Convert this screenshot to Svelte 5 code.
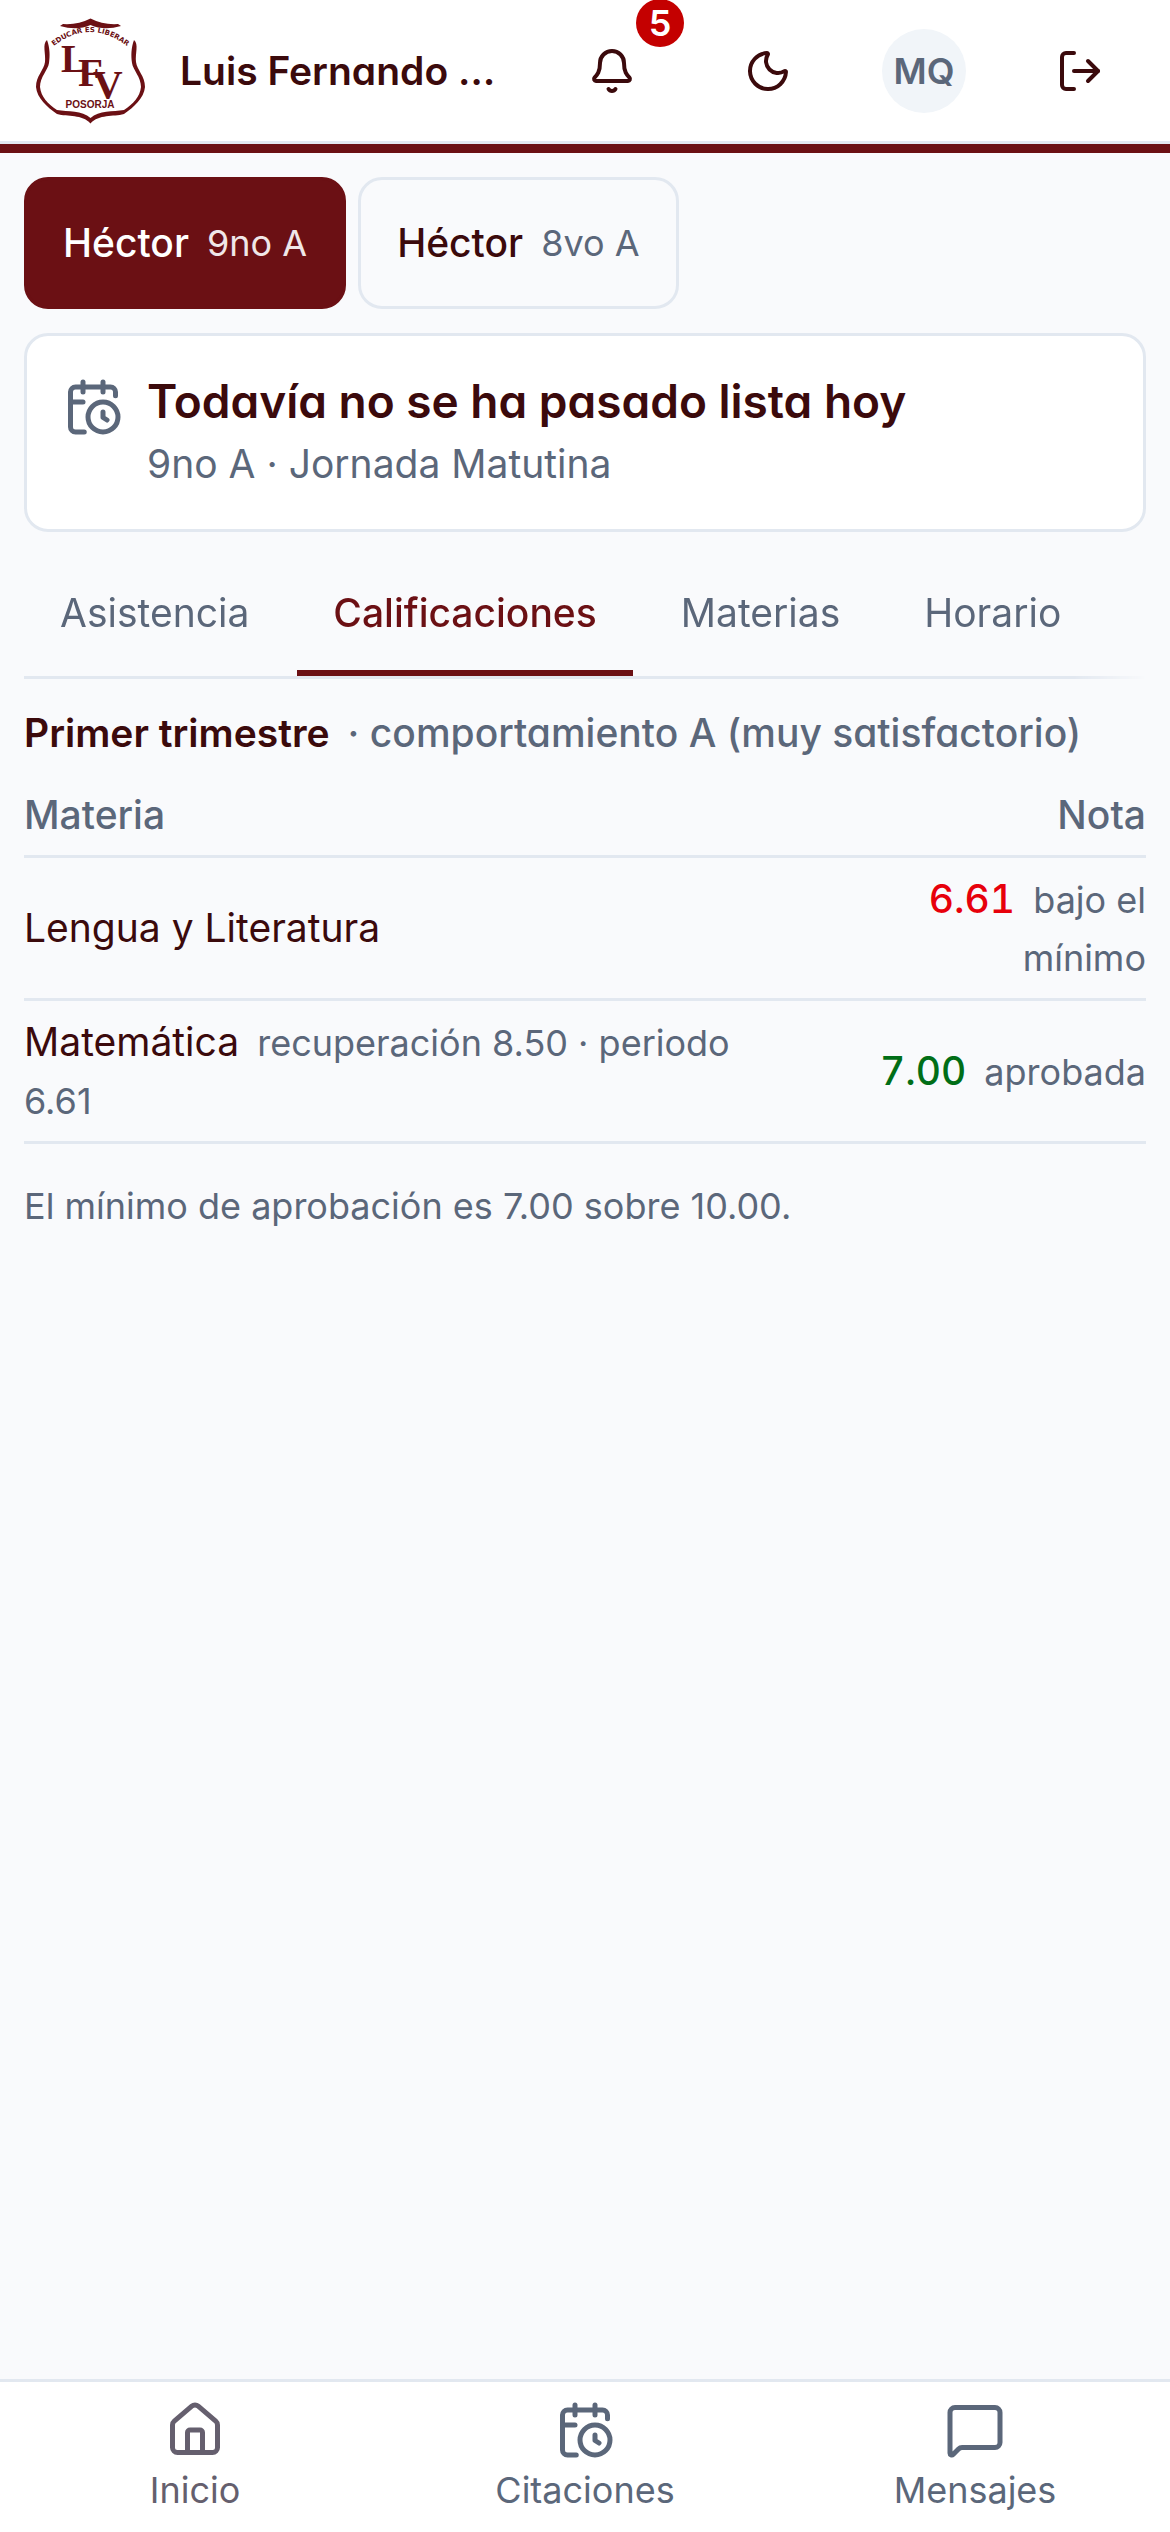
<script>
  const students = [
    { name: 'Héctor', course: '9no A' },
    { name: 'Héctor', course: '8vo A' }
  ];
  const tabs = ['Asistencia', 'Calificaciones', 'Materias', 'Horario'];
  const grades = [
    { subject: 'Lengua y Literatura', detail: '', grade: '6.61', status: 'bajo el mínimo', passed: false },
    { subject: 'Matemática', detail: 'recuperación 8.50 · periodo 6.61', grade: '7.00', status: 'aprobada', passed: true }
  ];
  const links = [
    { label: 'Inicio', icon: 'house' },
    { label: 'Citaciones', icon: 'calendar' },
    { label: 'Mensajes', icon: 'message' }
  ];
  let student = $state(0);
  let tab = $state(1);
</script>

{#snippet icon(name, cls)}
  <svg class={cls} viewBox="0 0 24 24" fill="none" stroke="currentColor" stroke-width="2" stroke-linecap="round" stroke-linejoin="round" aria-hidden="true">
    {#if name === 'bell'}
      <path d="M10.268 21a2 2 0 0 0 3.464 0" />
      <path d="M3.262 15.326A1 1 0 0 0 4 17h16a1 1 0 0 0 .74-1.673C19.41 13.956 18 12.499 18 8A6 6 0 0 0 6 8c0 4.499-1.411 5.956-2.738 7.326" />
    {:else if name === 'moon'}
      <path d="M20.985 12.486a9 9 0 1 1-9.473-9.472c.405-.022.617.46.402.803a6 6 0 0 0 8.268 8.268c.344-.215.825-.004.803.401" />
    {:else if name === 'logout'}
      <path d="m16 17 5-5-5-5" />
      <path d="M21 12H9" />
      <path d="M9 21H5a2 2 0 0 1-2-2V5a2 2 0 0 1 2-2h4" />
    {:else if name === 'calendar'}
      <path d="M16 14v2.2l1.6 1" />
      <path d="M16 2v4" />
      <path d="M21 7.5V6a2 2 0 0 0-2-2H5a2 2 0 0 0-2 2v14a2 2 0 0 0 2 2h3.5" />
      <path d="M3 10h5" />
      <path d="M8 2v4" />
      <circle cx="16" cy="16" r="6" />
    {:else if name === 'house'}
      <path d="M15 21v-8a1 1 0 0 0-1-1h-4a1 1 0 0 0-1 1v8" />
      <path d="M3 10a2 2 0 0 1 .709-1.528l7-6a2 2 0 0 1 2.582 0l7 6A2 2 0 0 1 21 10v9a2 2 0 0 1-2 2H5a2 2 0 0 1-2-2z" />
    {:else}
      <path d="M22 17a2 2 0 0 1-2 2H6.828a2 2 0 0 0-1.414.586l-2.202 2.202A.71.71 0 0 1 2 21.286V5a2 2 0 0 1 2-2h16a2 2 0 0 1 2 2z" />
    {/if}
  </svg>
{/snippet}

<div class="page">
  <header>
    <a class="logo" href="#inicio" aria-label="Portada">
      <svg viewBox="4 5 132 132" aria-hidden="true">
        <defs><path id="motto" d="M29 50Q70 14 112 50" /></defs>
        <path d="M40 26L43 24Q58 25 70.5 18.500Q83 25 98 24L101 26Q84 31 70.500 25Q57 31 40 26Z" />
        <path d="M27 40C22 44 26 54 25 62C24 70 16 76 16 87C17 98 27 107 37 114C48 117 62 114 70.500 123.500C79 114 93 117 104 114C114 107 124 98 125 87C125 76 117 70 116 62C115 54 119 44 114 40C111 48 111 56 112 63C113 70 121 77 121 87C120 97 113 104 104 110C93 112 79 110 70.500 118C62 110 48 112 37 110C28 104 21 97 20 87C20 77 28 70 29 63C30 56 30 48 27 40Z" />
        <text class="motto"><textPath href="#motto" startOffset="50%" text-anchor="middle">EDUCAR ES LIBERAR</textPath></text>
        <text class="letter first" x="41" y="72">L</text>
        <text class="letter" x="58" y="86">F</text>
        <text class="letter" x="73" y="98">V</text>
        <text class="town" x="70" y="108" text-anchor="middle">POSORJA</text>
      </svg>
    </a>
    <h1>Luis Fernando …</h1>
    <button class="action" aria-label="Notificaciones">{@render icon('bell', 'small')}<span class="badge">5</span></button>
    <button class="action" aria-label="Modo oscuro">{@render icon('moon', 'small')}</button>
    <button class="action" aria-label="Perfil"><span class="avatar">MQ</span></button>
    <button class="action" aria-label="Salir">{@render icon('logout', 'small')}</button>
  </header>

  <main>
    <div class="chips">
      {#each students as s, i}
        <button class="chip" class:active={student === i} onclick={() => (student = i)}>
          <span class="name">{s.name}</span><span class="course">{s.course}</span>
        </button>
      {/each}
    </div>

    <section class="card">
      {@render icon('calendar', 'large')}
      <div>
        <h2>Todavía no se ha pasado lista hoy</h2>
        <p>9no A · Jornada Matutina</p>
      </div>
    </section>

    <div class="tabs" role="tablist">
      {#each tabs as t, i}
        <button class="tab" role="tab" aria-selected={tab === i} class:active={tab === i} onclick={() => (tab = i)}>{t}</button>
      {/each}
    </div>

    <h3><strong>Primer trimestre</strong><span>· comportamiento A (muy satisfactorio)</span></h3>

    <table>
      <thead>
        <tr><th scope="col">Materia</th><th scope="col" class="mark">Nota</th></tr>
      </thead>
      <tbody>
        {#each grades as g}
          <tr>
            <td>{g.subject}{#if g.detail}<small>{' '}{g.detail}</small>{/if}</td>
            <td class="mark"><b class:passed={g.passed}>{g.grade}</b><small>{' '}{g.status}</small></td>
          </tr>
        {/each}
      </tbody>
    </table>

    <p class="note">El mínimo de aprobación es 7.00 sobre 10.00.</p>
  </main>

  <nav>
    {#each links as l, i}
      <a href={'#' + l.icon} class:current={i === 0}>{@render icon(l.icon, 'large')}<span>{l.label}</span></a>
    {/each}
  </nav>
</div>

<style>
  :global(body) {
    margin: 0;
    background: #f9fafc;
  }
  .page {
    --maroon: #6b1014;
    --ink: #3b0a0c;
    --muted: #5b677a;
    --line: #e2e8f0;
    display: flex;
    flex-direction: column;
    min-height: 100vh;
    color: var(--ink);
    font: 400 39px/58px Inter, sans-serif;
  }
  h1, h2, h3, p {
    margin: 0;
  }
  button {
    border: 0;
    padding: 0;
    background: none;
    color: inherit;
    font: inherit;
    cursor: pointer;
  }
  a {
    color: inherit;
    text-decoration: none;
  }
  svg {
    display: block;
    flex: none;
  }
  .small {
    width: 48px;
    height: 48px;
  }
  .large {
    width: 60px;
    height: 60px;
  }
  h1, h2, h3 {
    font-feature-settings: 'cv11';
    font-weight: 600;
  }

  header {
    display: flex;
    align-items: center;
    gap: 24px;
    padding: 5px 24px 7px;
    background: #fff;
    border-bottom: 9px solid var(--maroon);
    box-shadow: inset 0 -3px var(--line);
  }
  .logo svg {
    width: 132px;
    height: 132px;
    fill: var(--maroon);
  }
  .letter {
    font: 700 41px 'Liberation Serif', serif;
  }
  .first {
    font-size: 39px;
  }
  .town {
    font: 700 10px 'Liberation Sans', sans-serif;
  }
  .motto {
    font: 700 7px 'DejaVu Sans', sans-serif;
  }
  h1 {
    flex: 1;
    min-width: 0;
    overflow: hidden;
    white-space: nowrap;
    font-size: 39px;
    line-height: 58px;
  }
  .action {
    position: relative;
    display: flex;
    align-items: center;
    justify-content: center;
    width: 132px;
    height: 132px;
  }
  .badge {
    position: absolute;
    top: -6px;
    right: -6px;
    width: 48px;
    border-radius: 24px;
    background: #c40000;
    color: #fff;
    font-size: 36px;
    font-weight: 600;
    line-height: 48px;
  }
  .avatar {
    width: 84px;
    border-radius: 42px;
    background: #f1f5f9;
    color: var(--muted);
    font-size: 36px;
    font-weight: 600;
    line-height: 84px;
  }

  main {
    flex: 1;
    padding: 24px;
  }
  .chips {
    display: flex;
    gap: 12px;
  }
  .chip {
    display: flex;
    align-items: center;
    gap: 18px;
    height: 132px;
    padding: 0 36px;
    border: 3px solid var(--line);
    border-radius: 24px;
  }
  .name {
    font-weight: 500;
  }
  .course {
    color: var(--muted);
    font-size: 36px;
  }
  .chip.active {
    border-color: var(--maroon);
    background: var(--maroon);
    color: #fff;
  }
  .active .course {
    color: #f0e7e8;
  }

  .card {
    display: flex;
    gap: 24px;
    margin-top: 24px;
    padding: 36px;
    border: 3px solid var(--line);
    border-radius: 24px;
    background: #fff;
    color: var(--muted);
  }
  .card svg {
    margin-top: 5px;
  }
  h2 {
    margin-bottom: 5px;
    color: var(--ink);
    font-size: 46px;
    line-height: 58px;
  }

  .tabs {
    display: flex;
    gap: 12px;
    margin-top: 18px;
    border-bottom: 3px solid var(--line);
    mask-image: linear-gradient(to right, #000 calc(100% - 72px), transparent);
  }
  .tab {
    height: 126px;
    padding: 0 36px;
    color: var(--muted);
  }
  .tab.active {
    color: var(--maroon);
    font-weight: 500;
    box-shadow: inset 0 -6px var(--maroon);
  }

  h3 {
    display: flex;
    gap: 18px;
    margin-top: 25px;
    font-size: 39px;
    line-height: 58px;
  }
  h3 strong {
    font-weight: 600;
  }
  h3 span {
    color: var(--muted);
    font-weight: 500;
  }

  table {
    width: 100%;
    margin-top: 12px;
    border-collapse: separate;
    border-spacing: 0;
  }
  th, td {
    padding: 12px 12px 12px 0;
    border-bottom: 3px solid var(--line);
    text-align: left;
  }
  th {
    padding-bottom: 11px;
    color: var(--muted);
    font-weight: 500;
  }
  .mark {
    width: 335px;
    padding-right: 0;
    padding-left: 12px;
    text-align: right;
  }
  small {
    margin-left: 8px;
    color: var(--muted);
    font-size: 36px;
    line-height: 54px;
  }
  b {
    color: #e7000b;
    font-weight: 500;
    font-variant-numeric: tabular-nums;
  }
  .passed {
    color: #016e17;
  }
  .note {
    margin-top: 33px;
    color: var(--muted);
    font-size: 36px;
  }

  nav {
    display: flex;
    padding: 18px 0 15px;
    border-top: 3px solid var(--line);
    background: #fff;
    color: var(--muted);
    font-size: 36px;
    line-height: 54px;
  }
  nav a {
    display: flex;
    flex: 1;
    flex-direction: column;
    align-items: center;
    gap: 3px;
  }
  .current {
    color: #655f6e;
  }
</style>
